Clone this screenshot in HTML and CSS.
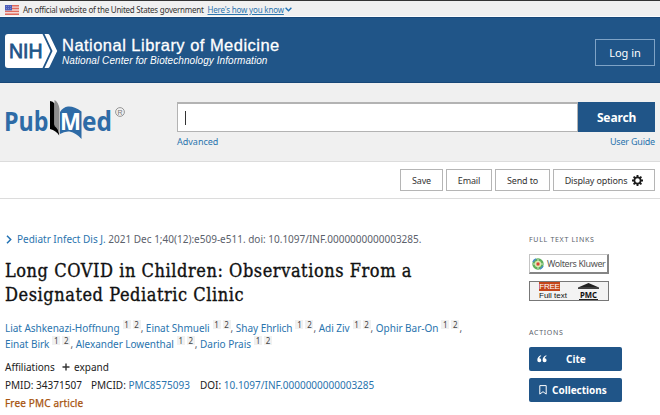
FILE: index.html
```html
<!DOCTYPE html>
<html lang="en">

<head>
    <meta charset="UTF-8">
    <meta name="viewport" content="width=device-width, initial-scale=1.0">
    <title>Long COVID in Children - PubMed</title>
    <link rel="stylesheet" href="styles.css">
</head>

<body>
    <div class="gov-banner">
        <svg class="flag" width="14" height="10" viewBox="0 0 14 10">
            <rect width="14" height="10" fill="#f3d9d6"/>
            <path d="M0 .7h14M0 3.5h14M0 6.4h14M0 9.3h14" stroke="#df6a5c" stroke-width="1.4"/>
            <rect width="7" height="5.4" fill="#4b5cb8"/>
            <path d="M1 1.4h5M1 3.6h5" stroke="#8fa0e0" stroke-width=".7" stroke-dasharray="1 1"/>
        </svg>
        <span class="gov-text">An official website of the United States government</span>
        <a class="gov-link" href="#">Here's how you know</a>
        <svg class="chevron" width="7" height="5" viewBox="0 0 7 5"><path d="M.6.8 3.5 3.7 6.4.8" fill="none" stroke="#2272b4" stroke-width="1.4"/></svg>
    </div>
    <header class="header">
        <svg class="nih-logo" width="53" height="34" viewBox="0 0 53 34">
            <path d="M3 0h34.5l8 17-8 17H3a3 3 0 0 1-3-3V3a3 3 0 0 1 3-3z" fill="#fff"/>
            <path d="M39.5 0h3.5q1 0 1.5 1l7.700 16-7.700 16q-.5 1-1.500 1h-3.500l8-17z" fill="#fff"/>
            <text x="4" y="24" textLength="33.5" lengthAdjust="spacingAndGlyphs" class="nih-text">NIH</text>
        </svg>
        <div class="brand">
            <div class="brand-name">National Library of Medicine</div>
            <div class="brand-sub">National Center for Biotechnology Information</div>
        </div>
        <button class="login">Log in</button>
    </header>
    <section class="search-area">
        <svg class="pubmed-logo" width="122" height="44" viewBox="0 0 122 44">
            <text x="-1" y="33.300" textLength="44.500" lengthAdjust="spacingAndGlyphs" class="logo-text">Pub</text>
            <path d="M45 3q3 0 4.500 2.500v25q-1.500-1.500-4.500-1.500z" fill="#000"/>
            <path d="M45 27q3-1 5.500 0 3 3 3.700 10.500-3-5-9.200-6.500z" fill="#000"/>
            <path d="M49.500 2q4 2 5 9v26q-1-6-5-9z" fill="#8d8d8d"/>
            <path d="M55 14q3-5 8-5.500 6-.5 13.500 5v27.500q-5-6-12-7.500-5-.5-9.500 2.500z" fill="#2e6ba6"/>
            <text x="55" y="32.300" textLength="21" lengthAdjust="spacingAndGlyphs" class="logo-text logo-m">M</text>
            <text x="77" y="33.300" textLength="30" lengthAdjust="spacingAndGlyphs" class="logo-text">ed</text>
            <circle cx="115" cy="14" r="4.400" fill="none" stroke="#8b8b8b" stroke-width=".9"/>
            <text x="112.600" y="16.600" class="logo-r">R</text>
        </svg>
        <div class="search">
            <div class="search-row">
                <div class="search-input"><span class="caret"></span></div>
                <button class="search-button">Search</button>
            </div>
            <div class="search-links">
                <a class="advanced" href="#">Advanced</a>
                <a class="guide" href="#">User Guide</a>
            </div>
        </div>
    </section>
    <div class="toolbar">
        <button class="tool save">Save</button>
        <button class="tool email">Email</button>
        <button class="tool send">Send to</button>
        <button class="tool display">
            <span>Display options</span>
            <svg width="11" height="11" viewBox="0 0 11 11">
                <path d="M5.500 0v11M0 5.500h11M1.600 1.600l7.800 7.800M9.400 1.600 1.600 9.400" stroke="#1b1b1b" stroke-width="1.900"/>
                <circle cx="5.500" cy="5.500" r="3.100" fill="#fff" stroke="#1b1b1b" stroke-width="1.700"/>
            </svg>
        </button>
    </div>
    <main class="content">
        <article class="article">
            <div class="citation">
                <svg width="6" height="9" viewBox="0 0 6 9"><path d="M1 .8 4.700 4.500 1 8.200" fill="none" stroke="#2272b4" stroke-width="1.500"/></svg>
                <div class="citation-text"><a href="#">Pediatr Infect Dis J.</a> 2021 Dec 1;40(12):e509-e511. doi: 10.1097/INF.0000000000003285.</div>
            </div>
            <h1 class="title">Long COVID in Children: Observations From a<br>Designated Pediatric Clinic</h1>
            <div class="authors">
                <div class="author-line"><a href="#">Liat Ashkenazi-Hoffnung</a><sup>1</sup><sup>2</sup>, <a href="#">Einat Shmueli</a><sup>1</sup><sup>2</sup>, <a href="#">Shay Ehrlich</a><sup>1</sup><sup>2</sup>, <a href="#">Adi Ziv</a><sup>1</sup><sup>2</sup>, <a href="#">Ophir Bar-On</a><sup>1</sup><sup>2</sup>,</div>
                <div class="author-line"><a href="#">Einat Birk</a><sup>1</sup><sup>2</sup>, <a href="#">Alexander Lowenthal</a><sup>1</sup><sup>2</sup>, <a href="#">Dario Prais</a><sup>1</sup><sup>2</sup></div>
            </div>
            <div class="affiliations">
                <span class="aff-label">Affiliations</span>
                <svg width="8" height="8" viewBox="0 0 8 8"><path d="M4 .5v7M.5 4h7" stroke="#333" stroke-width="1.400"/></svg>
                <span class="expand">expand</span>
            </div>
            <div class="ids">
                <span class="pmid">PMID: 34371507</span>
                <span class="pmcid">PMCID: <a href="#">PMC8575093</a></span>
                <span class="doi">DOI: <a href="#">10.1097/INF.0000000000003285</a></span>
            </div>
            <div class="free">Free PMC article</div>
        </article>
        <aside class="sidebar">
            <div class="side-title links-title">FULL TEXT LINKS</div>
            <div class="wk">
                <svg width="12" height="12" viewBox="0 0 12 12">
                    <circle cx="6" cy="6" r="5.700" fill="#5eae5c"/>
                    <path d="M1 4a5.400 5.400 0 0 1 3-3M8 11a5.400 5.400 0 0 0 3-3" fill="none" stroke="#478fc8" stroke-width="1.500"/>
                    <circle cx="6" cy="6" r="3.300" fill="#d6e8a6"/>
                    <path d="M6 1v10M1 6h10" stroke="#e6f2d9" stroke-width=".8"/>
                    <circle cx="6" cy="6" r="1.700" fill="#d94435"/>
                </svg>
                <span class="wk-name">Wolters Kluwer</span>
            </div>
            <div class="pmc">
                <div class="pmc-text">
                    <span class="pmc-free">FREE</span>
                    <span class="pmc-full">Full text</span>
                </div>
                <svg width="21" height="18" viewBox="0 0 21 18">
                    <path d="M10.500 0 21 4.500V6H0V4.500z" fill="#222"/>
                    <path d="M0 5h21" stroke="#888" stroke-width=".6"/>
                    <text x="2" y="14.600" textLength="17" lengthAdjust="spacingAndGlyphs" class="pmc-label">PMC</text>
                    <path d="M1 16.500h19" stroke="#222" stroke-width="1"/>
                </svg>
            </div>
            <div class="side-title actions-title">ACTIONS</div>
            <button class="action cite">
                <svg width="10" height="8" viewBox="0 0 10 8">
                    <path d="M4 .2Q.3 1.500.3 5.300a2 2 0 1 0 2-2Q2.500 2 4.200 1zM9.300.2Q5.600 1.500 5.600 5.300a2 2 0 1 0 2-2Q7.800 2 9.500 1z" fill="#fff"/>
                </svg>
                <span>Cite</span>
            </button>
            <button class="action collections">
                <svg width="8" height="10" viewBox="0 0 8 10"><path d="M.8.600h6.400v8.500L4 6.700.8 9.100z" fill="none" stroke="#fff" stroke-width="1"/></svg>
                <span>Collections</span>
            </button>
        </aside>
    </main>
</body>

</html>
```
FILE: styles.css
```css
* {
    box-sizing: border-box;
}

body {
    margin: 0;
    font-family: 'Noto Sans', 'Open Sans', sans-serif;
    font-size: 10px;
    color: #212121;
    background: #fff;
    height: 415px;
    overflow: hidden;
    white-space: nowrap;
}

a {
    color: #2a74ae;
    text-decoration: none;
}

button {
    font-family: inherit;
    padding: 0;
    margin: 0;
}

svg {
    display: block;
    flex: none;
}

.gov-banner {
    display: flex;
    align-items: center;
    height: 17px;
    padding: 2px 0 0 5px;
    border-top: 1px solid #333;
    border-bottom: 1px solid #f9fcff;
    background: #f0f0f0;
    font-size: 8px;
}

.gov-text {
    margin-left: 4px;
    width: 184.5px;
    letter-spacing: -0.24px;
    color: #333;
}

.gov-link {
    text-decoration: underline;
    letter-spacing: -0.17px;
}

.chevron {
    margin-left: 1px;
}

.header {
    display: flex;
    height: 66px;
    padding: 16px 5px 0;
    background: #205588;
    border-top: 1px solid #174778;
    border-bottom: 1px solid #174778;
    color: #fff;
}

.nih-text {
    font: 20px 'Liberation Sans', sans-serif;
    fill: #205588;
    stroke: #205588;
    stroke-width: 0.8px;
}

.brand {
    padding: 1px 0 0 4px;
    font-family: 'Liberation Sans', sans-serif;
}

.brand-name {
    font-size: 16.5px;
    line-height: 20px;
    letter-spacing: 0.47px;
    -webkit-text-stroke: 0.3px #fff;
}

.brand-sub {
    font-size: 10px;
    line-height: 12px;
    font-style: italic;
    letter-spacing: 0.07px;
}

.login {
    width: 60px;
    height: 27px;
    margin: 5px 0 0 auto;
    background: none;
    border: 1px solid #7fa3c6;
    color: #fff;
    font-size: 11px;
}

.search-area {
    display: flex;
    height: 79px;
    padding: 15px 5px 0;
    background: #f0f0f0;
    border-bottom: 1px solid #dcdcdc;
}

.logo-text {
    font: bold 26px 'Open Sans', sans-serif;
    fill: #2e6ba6;
}

.logo-m {
    fill: #fff;
    font-size: 23px;
}

.logo-r {
    font: 7px 'Liberation Sans', sans-serif;
    fill: #777;
}

.search {
    margin: 4px 0 0 50px;
    width: 478px;
}

.search-row {
    display: flex;
    height: 30px;
}

.search-input {
    flex: 1;
    padding: 7px 0 0 7px;
    background: #fff;
    border: 1px solid #b3b3b3;
    border-top: 2px solid #b3b3b3;
}

.caret {
    display: block;
    width: 1px;
    height: 14px;
    background: #333;
}

.search-button {
    width: 77px;
    background: #205588;
    border: 0;
    color: #fff;
    font-size: 12px;
    font-weight: bold;
    letter-spacing: -0.15px;
}

.search-links {
    display: flex;
    justify-content: space-between;
    padding-top: 3px;
    font-size: 9px;
    line-height: 13px;
}

.guide {
    letter-spacing: -0.2px;
}

.toolbar {
    display: flex;
    height: 37px;
    padding: 7px 5px 0 400px;
    border-bottom: 1px solid #dcdcdc;
}

.tool {
    height: 22px;
    margin-right: 3px;
    background: #fff;
    border: 1px solid #b5b5b5;
    color: #333;
    font-size: 9px;
    letter-spacing: -0.15px;
}

.save {
    width: 43px;
}

.email {
    width: 46px;
}

.send {
    width: 55px;
}

.display {
    display: flex;
    align-items: center;
    justify-content: center;
    gap: 5px;
    width: 102px;
    margin-right: 0;
}

.content {
    display: flex;
    padding: 0 5px;
}

.article {
    width: 524px;
    padding-top: 32px;
}

.citation {
    display: flex;
    align-items: center;
    gap: 5px;
    height: 16px;
    padding-left: 1px;
    color: #5b616b;
}

.title {
    margin: 12px 0 0;
    font: 18px/24px 'DejaVu Serif Condensed', 'DejaVu Serif', serif;
    font-stretch: condensed;
    letter-spacing: 0.56px;
    -webkit-text-stroke: 0.35px #111;
    color: #111;
}

.authors {
    margin-top: 13px;
    line-height: 16px;
    letter-spacing: -0.03px;
    color: #5b616b;
}

.author-line {
    height: 16px;
}

.authors sup {
    display: inline-block;
    width: 8px;
    margin-left: 3px;
    background: #f1f1f1;
    font-size: 8px;
    line-height: 9px;
    text-align: center;
    vertical-align: 4px;
    color: #444;
}

.authors sup + sup {
    margin-left: 2px;
}

.affiliations {
    display: flex;
    align-items: center;
    height: 18px;
    margin-top: 6px;
}

.aff-label {
    width: 57px;
}

.expand {
    margin-left: 4px;
}

.ids {
    display: flex;
    height: 18px;
    line-height: 18px;
}

.pmid {
    width: 86px;
}

.pmcid {
    width: 109px;
}

.free {
    line-height: 18px;
    letter-spacing: 0.15px;
    color: #a8550f;
    -webkit-text-stroke: 0.25px #a8550f;
}

.sidebar {
    width: 93px;
    padding-top: 35px;
}

.side-title {
    height: 12px;
    font-size: 7px;
    line-height: 12px;
    letter-spacing: 0.7px;
    color: #5b616b;
}

.wk {
    display: flex;
    align-items: center;
    width: 80px;
    height: 20px;
    margin-top: 8px;
    padding-left: 2px;
    border: 1px solid #c4c4c4;
    border-right: 2px solid #858585;
    border-bottom: 2px solid #858585;
    color: #555;
}

.wk-name {
    margin-left: 3px;
    font-size: 9px;
    letter-spacing: -0.4px;
}

.pmc {
    display: flex;
    width: 80px;
    height: 20px;
    margin-top: 7px;
    padding: 0 0 0 9px;
    border: 1px solid #777;
    background: #f3f3f3;
    color: #111;
}

.pmc svg {
    margin-top: 1px;
}

.pmc-text {
    width: 39px;
    font-family: 'Liberation Sans', sans-serif;
}

.pmc-free,
.pmc-full {
    display: block;
    font-size: 8px;
    line-height: 9px;
}

.pmc-free {
    width: 21px;
    background: #c4461a;
    color: #fff;
    text-align: center;
    letter-spacing: -0.2px;
}

.pmc-label {
    font: bold 9px 'Noto Sans', sans-serif;
    fill: #111;
}

.actions-title {
    margin-top: 26px;
}

.action {
    display: flex;
    align-items: center;
    width: 93px;
    height: 24px;
    border: 0;
    border-radius: 2px;
    background: #205588;
    color: #fff;
    font-size: 10px;
    font-weight: bold;
}

.cite {
    gap: 19px;
    margin-top: 8px;
    padding-left: 8px;
}

.collections {
    gap: 5px;
    margin-top: 7px;
    padding-left: 10px;
}
```
